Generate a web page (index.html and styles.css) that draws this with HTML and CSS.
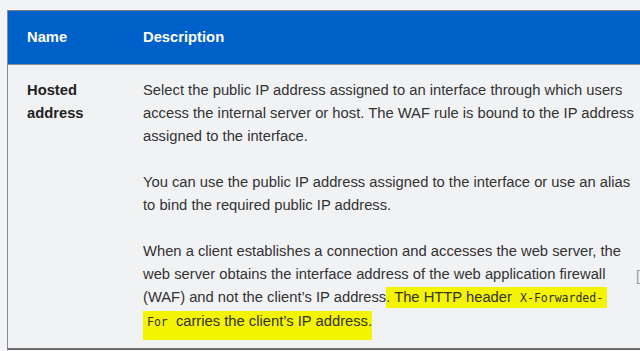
FILE: index.html
```html
<!DOCTYPE html>
<html lang="en">
<head>
<meta charset="utf-8">
<title>Hosted address</title>
<link rel="stylesheet" href="styles.css">
</head>
<body>
<div class="table">
  <div class="row head">
    <div class="c1">Name</div>
    <div class="c2">Description</div>
  </div>
  <div class="row body">
    <div class="c1 name">Hosted address</div>
    <div class="c2">
      <p>Select the public IP address assigned to an interface through which users access the internal server or host. The WAF rule is bound to the IP address assigned to the interface.</p>
      <p>You can use the public IP address assigned to the interface or use an alias to bind the required public IP address.</p>
      <p class="last">When a client establishes a connection and accesses the web server, the web server obtains the interface address of the web application firewall (WAF) and not the client’s IP address<mark>. The HTTP header <code>X-Forwarded-</code></mark><br><mark class="tail"><code>For</code> carries the client’s IP address.</mark></p>
    </div>
  </div>
</div>
<span class="edge">[</span>
</body>
</html>
```
FILE: styles.css
```css
html, body {
  margin: 0;
  padding: 0;
}
body {
  background: #f3f4f6;
  width: 640px;
  height: 351px;
  overflow: hidden;
  position: relative;
  font-family: "Liberation Sans", Arial, sans-serif;
  font-size: 14.75px;
  line-height: 23px;
  color: #333;
  padding: 10px 0 0 7px;
  box-sizing: border-box;
}
.table {
  width: 660px;
  border-top: 1px solid #7a7a7a;
  border-left: 1px solid #8a8a8a;
  border-bottom: 2px solid #6e6e6e;
}
.row {
  display: grid;
  grid-template-columns: 135px 1fr;
}
.c1 {
  padding-left: 19px;
  padding-right: 10px;
}
.c2 {
  padding-right: 32px;
}
.head {
  background: #0060c9;
  color: #fff;
  font-weight: bold;
  padding: 15px 0;
  border-bottom: 1px solid #8a8f96;
}
.body {
  background: #f1f2f4;
  padding: 14px 0 14px;
}
.name {
  font-weight: bold;
  color: #222;
}
p {
  margin: 0 0 23px;
}
p.last {
  margin-bottom: 0;
}
mark {
  background: #f4f400;
  color: #333;
  padding: 2px 0 3px;
}
mark.tail {
  padding-bottom: 11px;
}
code {
  font-family: "DejaVu Sans Mono", "Liberation Mono", monospace;
  font-size: 11.5px;
  padding: 0 4px;
  color: #333;
}
.edge {
  position: absolute;
  left: 636px;
  top: 265px;
  color: #9a9a9a;
  font-size: 14px;
}
```
